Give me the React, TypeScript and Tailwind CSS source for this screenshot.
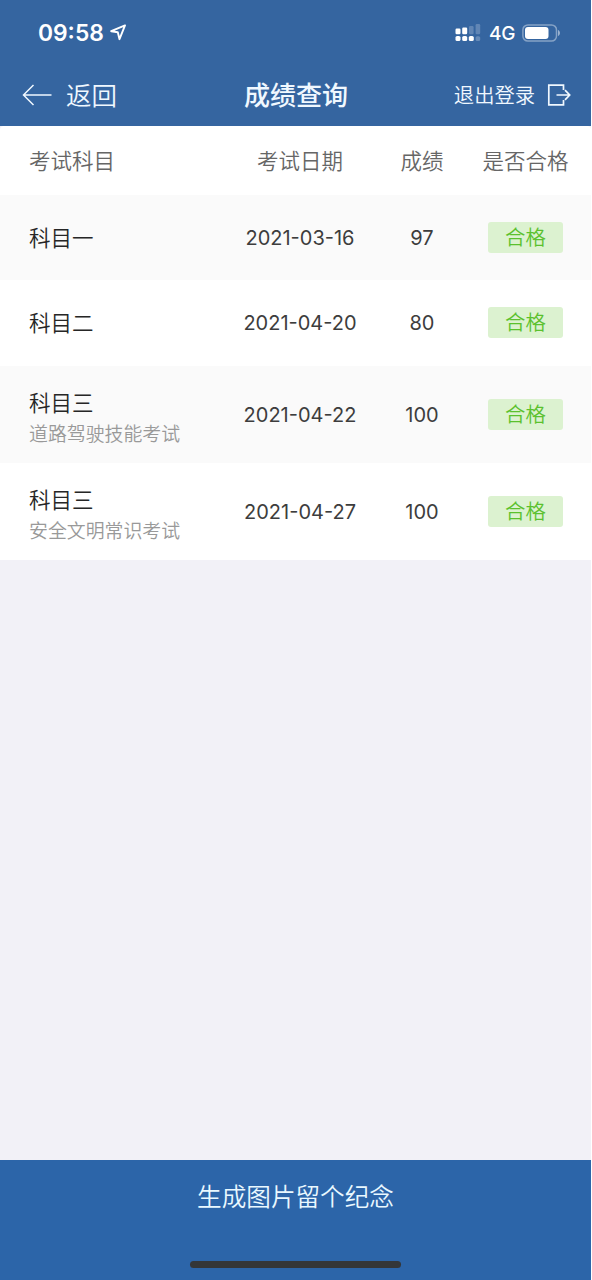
type Result = {
  subject: string;
  detail?: string;
  date: string;
  score: number;
  height: string;
};

const results: Result[] = [
  { subject: "科目一", date: "2021-03-16", score: 97, height: "h-[85px] bg-[#fafafa]" },
  { subject: "科目二", date: "2021-04-20", score: 80, height: "h-[86px] bg-white pb-px" },
  { subject: "科目三", detail: "道路驾驶技能考试", date: "2021-04-22", score: 100, height: "h-[97px] bg-[#fafafa]" },
  { subject: "科目三", detail: "安全文明常识考试", date: "2021-04-27", score: 100, height: "h-[97px] bg-white" },
];

const columns = "grid grid-cols-[199px_144px_100px_107px] items-center pl-[29px]";

function StatusBar() {
  return (
    <div className="flex h-[64px] items-center justify-between pl-[38px] pr-[31px] pt-[2px] text-white">
      <div className="flex items-center gap-[6px]">
        <span className="text-[22.8px] font-semibold leading-none">09:58</span>
        <svg width="17" height="17" viewBox="0 0 17 17" fill="none" stroke="currentColor" strokeWidth="1.9" strokeLinejoin="round">
          <path d="M15 1.4 1.2 7.2l6.6 1 1.7 7z" />
        </svg>
      </div>
      <div className="flex items-center">
        <svg width="26" height="18" viewBox="0 0 26 18" fill="currentColor">
          <rect x="0.5" y="4.5" width="5" height="5.8" rx="1.2" />
          <rect x="7.2" y="3.5" width="5" height="6.8" rx="1.2" />
          <rect x="14" y="2" width="4.6" height="8.3" rx="1.2" opacity=".22" />
          <rect x="20.6" y="0" width="4.6" height="10.3" rx="1.2" opacity=".22" />
          <rect x="0.5" y="12" width="5" height="5" rx="1.6" />
          <rect x="7.2" y="12" width="5" height="5" rx="1.6" />
          <rect x="13.8" y="12" width="5" height="5" rx="1.6" />
          <rect x="20.6" y="12.2" width="4.6" height="4.8" rx="1.6" opacity=".25" />
        </svg>
        <span className="ml-[8px] w-[27px] text-[19px] font-medium leading-none tracking-[-0.3px]">4G</span>
        <svg className="ml-[6px]" width="38" height="18" viewBox="0 0 38 18">
          <rect x="0.9" y="0.9" width="33.6" height="16.2" rx="5" fill="none" stroke="#fff" strokeOpacity=".4" strokeWidth="1.5" />
          <rect x="3" y="3" width="23.5" height="12" rx="3" fill="#fff" />
          <path d="M36 6c2.6.8 2.6 5.2 0 6z" fill="#fff" fillOpacity=".5" />
        </svg>
      </div>
    </div>
  );
}

function NavBar() {
  return (
    <div className="grid h-[62px] grid-cols-[1fr_auto_1fr] items-center pl-[22px] pr-[20px] text-[#f0f8ff]">
      <button className="flex items-center gap-[14px]">
        <svg width="30" height="22" viewBox="0 0 30 22" fill="none" stroke="currentColor" strokeWidth="1.5">
          <path d="M11.5 1 1.5 11l10 10M1.5 11h28" />
        </svg>
        <span className="pt-px text-[25.5px] font-[350] leading-none">返回</span>
      </button>
      <h1 className="-ml-px pt-px text-[26px] font-medium leading-none">成绩查询</h1>
      <button className="flex items-center justify-end gap-[12px]">
        <span className="pt-[2px] text-[20.3px] font-[350] leading-none">退出登录</span>
        <svg width="24" height="22" viewBox="0 0 24 22" fill="none" stroke="currentColor" strokeWidth="1.7">
          <path d="M16.5 6V1.2H1.8v19.6h14.7V16M9.5 11H22.6M18 6.2l4.7 4.8-4.7 4.8" />
        </svg>
      </button>
    </div>
  );
}

function ResultRow({ subject, detail, date, score, height }: Result) {
  return (
    <div className={`${columns} ${height} text-[20px] text-[#3d3d3d]`}>
      <div className={detail ? "flex flex-col gap-[8px] pt-[8px]" : "flex flex-col"}>
        <span className="text-[21.5px] font-[350] leading-[24px] text-[#262626]">{subject}</span>
        {detail && <span className="text-[18.9px] font-[350] leading-[24px] text-[#999]">{detail}</span>}
      </div>
      <span className="pt-px text-center leading-none">{date}</span>
      <span className="pt-px text-center leading-none">{score}</span>
      <span className="flex h-[31px] w-[75px] items-center justify-center justify-self-center rounded-[3px] bg-[#dcf2d0] pt-[2px] text-[20.4px] font-[350] leading-none text-[#5bc12e]">
        合格
      </span>
    </div>
  );
}

export default function App() {
  return (
    <div className="min-h-[1280px] w-[592px] bg-white pr-px font-['Inter','Noto_Sans_CJK_SC',sans-serif]">
      <div className="flex h-[1280px] flex-col bg-[#f2f1f7]">
        <header className="bg-[#3565a0]">
          <StatusBar />
          <NavBar />
        </header>
        <main className="flex-1">
          <div className={`${columns} h-[69px] rounded-t-[4px] bg-white pt-[2px] text-[21.5px] font-[350] leading-none text-[#666]`}>
            <span>考试科目</span>
            <span className="text-center">考试日期</span>
            <span className="text-center">成绩</span>
            <span className="text-center">是否合格</span>
          </div>
          {results.map((result) => (
            <ResultRow key={result.date} {...result} />
          ))}
        </main>
        <footer className="flex h-[120px] flex-col items-center justify-between bg-[#2c65a9] pb-[12px] pt-[25px]">
          <button className="text-[24.6px] font-[350] leading-none text-[#e9f8ff]">生成图片留个纪念</button>
          <div className="h-[7px] w-[211px] rounded-full bg-[#343638]" />
        </footer>
      </div>
    </div>
  );
}
